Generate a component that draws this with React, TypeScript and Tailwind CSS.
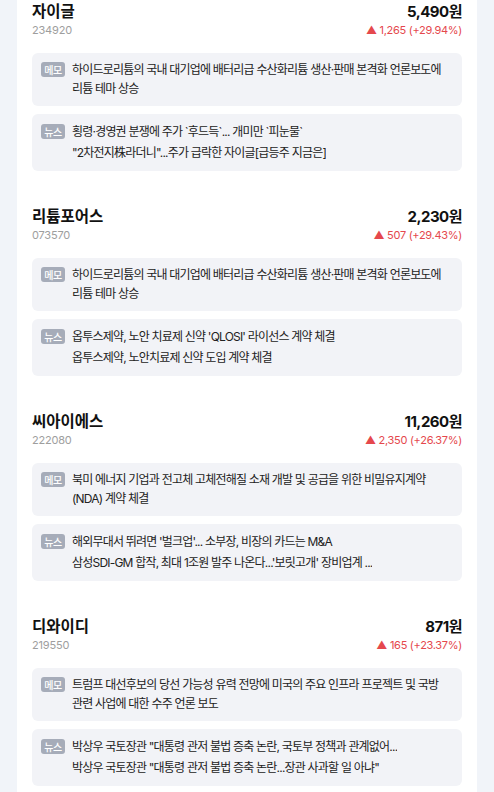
const stocks = [
  {
    name: '자이글',
    code: '234920',
    price: '5,490원',
    change: '1,265 (+29.94%)',
    memo: '하이드로리튬의 국내 대기업에 배터리급 수산화리튬 생산·판매 본격화 언론보도에 리튬 테마 상승',
    news: ['횡령·경영권 분쟁에 주가 `후드득`... 개미만 `피눈물`', '"2차전지株라더니"...주가 급락한 자이글[급등주 지금은]'],
  },
  {
    name: '리튬포어스',
    code: '073570',
    price: '2,230원',
    change: '507 (+29.43%)',
    memo: '하이드로리튬의 국내 대기업에 배터리급 수산화리튬 생산·판매 본격화 언론보도에 리튬 테마 상승',
    news: ["옵투스제약, 노안 치료제 신약 'QLOSI' 라이선스 계약 체결", '옵투스제약, 노안치료제 신약 도입 계약 체결'],
  },
  {
    name: '씨아이에스',
    code: '222080',
    price: '11,260원',
    change: '2,350 (+26.37%)',
    memo: '북미 에너지 기업과 전고체 고체전해질 소재 개발 및 공급을 위한 비밀유지계약 (NDA) 계약 체결',
    news: ["해외무대서 뛰려면 '벌크업'... 소부장, 비장의 카드는 M&A", "삼성SDI-GM 합작, 최대 1조원 발주 나온다...'보릿고개' 장비업계 ..."],
  },
  {
    name: '디와이디',
    code: '219550',
    price: '871원',
    change: '165 (+23.37%)',
    memo: '트럼프 대선후보의 당선 가능성 유력 전망에 미국의 주요 인프라 프로젝트 및 국방 관련 사업에 대한 수주 언론 보도',
    news: ['박상우 국토장관 "대통령 관저 불법 증축 논란, 국토부 정책과 관계없어...', '박상우 국토장관 "대통령 관저 불법 증축 논란...장관 사과할 일 아냐"'],
  },
];

function Tag({ label }: { label: string }) {
  return (
    <span className="mt-[2px] flex h-[15px] w-[24px] shrink-0 items-center justify-center rounded-[3px] bg-[#a6acb9] text-[10px] font-medium leading-none tracking-[-0.5px] text-white">
      {label}
    </span>
  );
}

export default function App() {
  return (
    <div
      className="min-h-[792px] bg-[#f1f4f9] px-[17px]"
      style={{ fontFamily: 'Inter, "Noto Sans CJK KR", sans-serif' }}
    >
      <div className="h-[792px] overflow-hidden bg-white px-[15px] pt-[2px]">
        {stocks.map((s) => (
          <div key={s.code} className="pb-[36px]">
            <div className="flex justify-between">
              <div>
                <p className="text-[15.5px] font-bold leading-[20px] text-[#111]">{s.name}</p>
                <p className="text-[11px] leading-[16px] tracking-[-0.2px] text-[#9e9e9e]">{s.code}</p>
              </div>
              <div className="text-right">
                <p className="text-[15px] font-bold leading-[20px] tracking-[-0.5px] text-[#111]">{s.price}</p>
                <p className="text-[11px] leading-[16px] tracking-[-0.3px] text-[#e5484d]">
                  <span className="text-[11px]">▲</span> {s.change}
                </p>
              </div>
            </div>

            <div className="mt-[15px] flex flex-col gap-[8px]">
              <div className="flex gap-[7px] rounded-md bg-[#f2f3f7] pb-[8px] pl-[9px] pr-[12px] pt-[7px]">
                <Tag label="메모" />
                <p className="text-[12px] leading-[19px] tracking-[-0.8px] text-[#222]">{s.memo}</p>
              </div>
              <div className="flex gap-[7px] rounded-md bg-[#f2f3f7] pb-[9px] pl-[9px] pr-[12px] pt-[8px]">
                <Tag label="뉴스" />
                <div className="flex min-w-0 flex-col gap-[2px]">
                  {s.news.map((n) => (
                    <p key={n} className="truncate text-[12px] leading-[19px] tracking-[-0.8px] text-[#222]">
                      {n}
                    </p>
                  ))}
                </div>
              </div>
            </div>
          </div>
        ))}
      </div>
    </div>
  );
}
